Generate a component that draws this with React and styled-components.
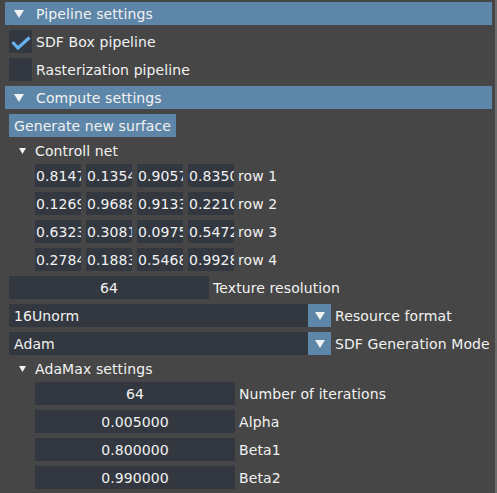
import React from 'react'
import styled, { createGlobalStyle } from 'styled-components'

const Global = createGlobalStyle`
  html, body { margin: 0; padding: 0; background: #464646; }
  body {
    font-family: "DejaVu Sans", "Liberation Sans", sans-serif;
    font-size: 14px;
    letter-spacing: 0.1px;
    color: #f2f2f2;
  }
`

const Win = styled.div`
  width: 497px;
  height: 493px;
  box-sizing: border-box;
  background: #464646;
  border-right: 2px solid #6c6c6c;
  padding: 2px 3px 0 5px;
  display: flex;
  flex-direction: column;
  gap: 5px;
  overflow: hidden;
`

const Header = styled.div`
  height: 23px;
  background: #5e86a8;
  display: flex;
  align-items: center;
  padding-left: 9px;
  gap: 12px;
  white-space: nowrap;
`

const Row = styled.div`
  height: 23px;
  display: flex;
  align-items: center;
  gap: ${p => p.$gap ?? 4}px;
  padding-left: ${p => p.$indent ?? 4}px;
  white-space: nowrap;
`

const TreeRow = styled.div`
  height: 17px;
  display: flex;
  align-items: center;
  padding-left: 14px;
  gap: 9px;
  white-space: nowrap;
`

const Box = styled.div`
  width: 23px;
  height: 23px;
  background: #333840;
  display: flex;
  align-items: center;
  justify-content: center;
`

const Button = styled.div`
  height: 23px;
  background: #5e86a8;
  padding: 0 5px 0 5px;
  display: flex;
  align-items: center;
`

const Cell = styled.div`
  width: 46px;
  height: 23px;
  background: #333840;
  overflow: hidden;
  display: flex;
  align-items: center;
  padding-left: 1px;
  box-sizing: border-box;
`

const Cells = styled.div`
  display: flex;
  gap: 5px;
`

const Field = styled.div`
  width: ${p => p.$w}px;
  height: 23px;
  background: #333840;
  display: flex;
  align-items: center;
  justify-content: ${p => (p.$left ? 'flex-start' : 'center')};
  padding-left: ${p => (p.$left ? 5 : 0)}px;
  box-sizing: border-box;
`

const Combo = styled.div`
  display: flex;
`

const ArrowBtn = styled.div`
  width: 23px;
  height: 23px;
  background: #5e86a8;
  display: flex;
  align-items: center;
  justify-content: center;
`

const Label = styled.span``

const BigArrow = () => (
  <svg width="10" height="8" viewBox="0 0 10 8">
    <polygon points="0,0 10,0 5,8" fill="#f2f2f2" />
  </svg>
)

const SmallArrow = () => (
  <svg width="7" height="6" viewBox="0 0 7 6">
    <polygon points="0,0 7,0 3.5,6" fill="#f2f2f2" />
  </svg>
)

const Check = () => (
  <svg width="23" height="23" viewBox="0 0 23 23">
    <polyline points="3.5,12 9,18 20.5,7.5" fill="none" stroke="#66b2ee" strokeWidth="3.2" />
  </svg>
)

const net = [
  ['0.8147', '0.1354', '0.9057', '0.8350'],
  ['0.1269', '0.9688', '0.9133', '0.2210'],
  ['0.6323', '0.3081', '0.0975', '0.5472'],
  ['0.2784', '0.1883', '0.5468', '0.9928'],
]

const adamax = [
  ['64', 'Number of iterations'],
  ['0.005000', 'Alpha'],
  ['0.800000', 'Beta1'],
  ['0.990000', 'Beta2'],
]

export default function App() {
  return (
    <>
      <Global />
      <Win>
        <Header><BigArrow /><Label>Pipeline settings</Label></Header>
        <Row><Box><Check /></Box><Label>SDF Box pipeline</Label></Row>
        <Row><Box /><Label>Rasterization pipeline</Label></Row>
        <Header><BigArrow /><Label>Compute settings</Label></Header>
        <Row><Button>Generate new surface</Button></Row>
        <TreeRow><SmallArrow /><Label>Controll net</Label></TreeRow>
        {net.map((r, i) => (
          <Row key={i} $indent={30}>
            <Cells>
              {r.map((v, j) => <Cell key={j}>{v}</Cell>)}
            </Cells>
            <Label>row {i + 1}</Label>
          </Row>
        ))}
        <Row><Field $w={200}>64</Field><Label>Texture resolution</Label></Row>
        <Row>
          <Combo><Field $w={299} $left>16Unorm</Field><ArrowBtn><BigArrow /></ArrowBtn></Combo>
          <Label>Resource format</Label>
        </Row>
        <Row>
          <Combo><Field $w={299} $left>Adam</Field><ArrowBtn><BigArrow /></ArrowBtn></Combo>
          <Label>SDF Generation Mode</Label>
        </Row>
        <TreeRow><SmallArrow /><Label>AdaMax settings</Label></TreeRow>
        {adamax.map(([v, l]) => (
          <Row key={l} $indent={30}>
            <Field $w={200}>{v}</Field>
            <Label>{l}</Label>
          </Row>
        ))}
      </Win>
    </>
  )
}
